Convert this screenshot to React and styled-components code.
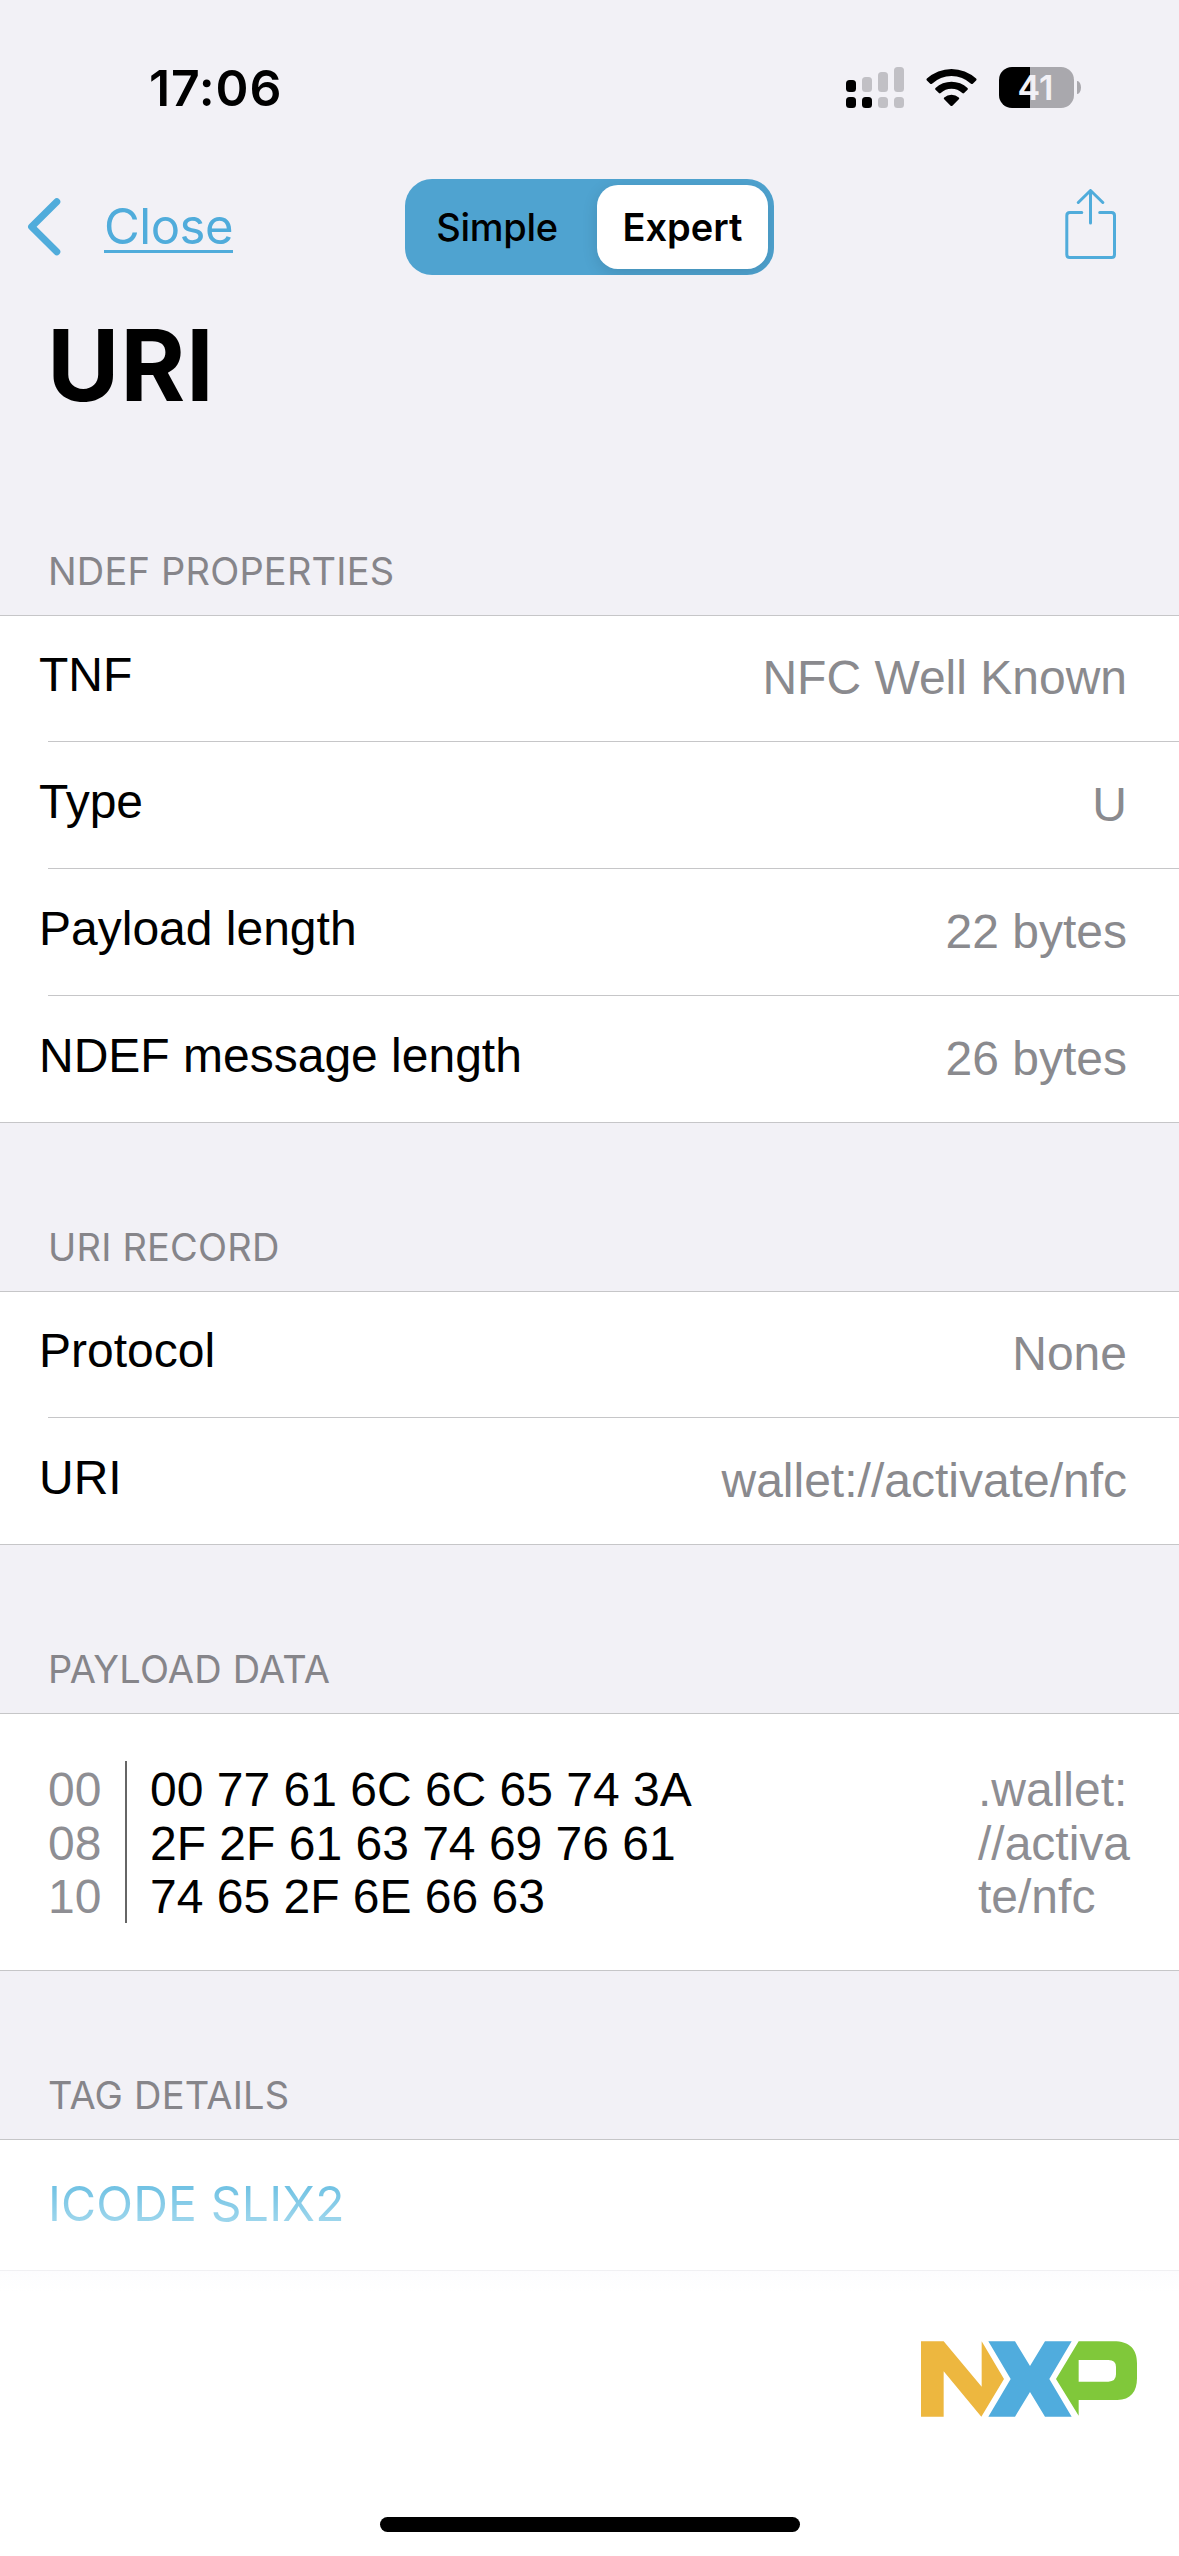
import { useState } from 'react';
import styled, { createGlobalStyle } from 'styled-components';

const sans = `Inter, "Liberation Sans", sans-serif`;
const arial = `"Liberation Sans", Arial, sans-serif`;

const GlobalStyle = createGlobalStyle`
  * {
    box-sizing: border-box;
  }

  body {
    margin: 0;
    background: #f2f1f6;
  }
`;

const Screen = styled.div`
  display: flex;
  flex-direction: column;
  width: 1179px;
  height: 2556px;
  overflow: hidden;
  background: #f2f1f6;
  color: #000;
  font-family: ${sans};
`;

const StatusBar = styled.header`
  display: flex;
  justify-content: space-between;
  height: 179px;
  padding: 58px 98px 0 149px;
`;

const Clock = styled.div`
  font-size: 50px;
  font-weight: 600;
  line-height: 60px;
  letter-spacing: 0.8px;
`;

const StatusIcons = styled.div`
  display: flex;
  align-items: flex-start;
  gap: 22px;
  padding-top: 9px;
`;

const Battery = styled.div`
  display: flex;
  align-items: center;
  gap: 3px;
`;

const BatteryBody = styled.div`
  width: 75px;
  height: 41px;
  padding-right: 2px;
  border-radius: 13px;
  background: linear-gradient(to right, #000 ${(p) => p.$level}%, #a9a8ad ${(p) => p.$level}%);
  color: #f2f1f6;
  font-size: 34px;
  font-weight: 600;
  line-height: 41px;
  text-align: center;
`;

const BatteryTip = styled.div`
  width: 4px;
  height: 13px;
  border-radius: 0 4px 4px 0 / 0 7px 7px 0;
  background: #a9a8ad;
`;

const NavBar = styled.nav`
  display: grid;
  grid-template-columns: 379px 369px 1fr;
  align-items: center;
  height: 96px;
  padding: 0 62px 0 26px;
`;

const BackButton = styled.button`
  display: flex;
  align-items: center;
  gap: 43px;
  padding: 0;
  border: none;
  background: none;
  color: #50acdb;
  font-family: ${sans};
  font-size: 49px;
  line-height: 60px;
  cursor: pointer;
`;

const BackText = styled.span`
  letter-spacing: -0.5px;
  text-decoration: underline;
  text-decoration-thickness: 3px;
  text-underline-offset: 6px;
  text-decoration-skip-ink: none;
`;

const Segmented = styled.div`
  display: flex;
  justify-content: space-between;
  width: 369px;
  height: 96px;
  padding: 6px;
  border-radius: 27px;
  overflow: hidden;
  background: #4fa3d0;
`;

const Segment = styled.button`
  width: ${(p) => (p.$active ? 171 : 172)}px;
  height: 84px;
  padding: 0;
  border: none;
  border-radius: 21px;
  background: ${(p) => (p.$active ? '#fff' : 'transparent')};
  box-shadow: ${(p) => (p.$active ? '0 4px 16px rgba(0, 0, 0, 0.12)' : 'none')};
  color: #000;
  font-family: ${sans};
  font-size: 38px;
  font-weight: ${(p) => (p.$active ? 600 : 500)};
  letter-spacing: ${(p) => (p.$active ? 0 : -0.3)}px;
  cursor: pointer;
`;

const ShareButton = styled.button`
  justify-self: end;
  display: flex;
  padding: 0 0 2px;
  border: none;
  background: none;
  color: #50acdb;
  cursor: pointer;
`;

const Title = styled.h1`
  height: 246px;
  margin: 0;
  padding: 30px 0 0 47px;
  font-size: 99px;
  font-weight: 700;
  line-height: 120px;
  letter-spacing: 0.8px;
`;

const SectionHeader = styled.h2`
  height: ${(p) => (p.$first ? 94 : 168)}px;
  margin: 0;
  padding: ${(p) => (p.$first ? 27 : 101)}px 0 0 48px;
  color: #86858a;
  font-size: 38px;
  font-weight: 400;
  line-height: 46px;
  letter-spacing: 0.2px;
`;

const Group = styled.div`
  border-top: 1px solid #c6c6c8;
  border-bottom: 1px solid #c6c6c8;
  background: #fff;
`;

const Row = styled.div`
  display: flex;
  justify-content: space-between;
  height: 127px;
  padding-top: 32px;
  font-family: ${arial};
  font-size: 48px;
  line-height: 56px;

  &:first-child {
    height: 125px;
    padding-top: 31px;
  }

  & + & {
    border-top: 1px solid #c6c6c8;
    margin-left: 48px;
  }
`;

// labels start left of the separator inset
const RowLabel = styled.span`
  margin-left: 39px;

  ${Row} + ${Row} & {
    margin-left: -9px;
  }
`;

const RowValue = styled.span`
  padding: 3px 52px 0 0;
  color: #8a8a8e;
`;

const Payload = styled.div`
  display: flex;
  height: 256px;
  padding: 47px 0 0 48px;
  font-family: ${arial};
  font-size: 48px;
  line-height: 53.5px;
  white-space: pre;
`;

const Offsets = styled.div`
  width: 77px;
  padding-top: 2px;
  color: #8e8e93;
`;

const HexBytes = styled.div`
  width: 853px;
  height: 162px;
  padding: 2px 0 0 23px;
  border-left: 2px solid #666;
`;

const Ascii = styled.div`
  padding-top: 2px;
  color: #8e8e93;
`;

const TagArea = styled.div`
  flex: 1;
  display: flex;
  flex-direction: column;
  border-top: 1px solid #c6c6c8;
  background: #fff;
`;

// the list dissolves into the footer, so the row carries its own white fade
const TagLink = styled.div`
  height: 160px;
  padding: 35px 0 0 48px;
  background: linear-gradient(#fff 130px, #f0f0f3 130px, #f0f0f3 131px, #fcfcfe 131px, #fff 152px);
  font-size: 48px;
  line-height: 58px;
  letter-spacing: 0.2px;
`;

const TagName = styled.span`
  display: inline-block;
  background: linear-gradient(#63bce1, #abdcef);
  background-clip: text;
  color: transparent;
`;

const Footer = styled.footer`
  flex: 1;
  display: flex;
  flex-direction: column;
  align-items: flex-end;
  justify-content: space-between;
  padding: 41px 41px 24px 0;
`;

const HomeIndicator = styled.div`
  align-self: center;
  width: 420px;
  height: 15px;
  margin-left: 42px;
  border-radius: 8px;
  background: #000;
`;

const sections = [
  {
    title: 'NDEF PROPERTIES',
    rows: [
      ['TNF', 'NFC Well Known'],
      ['Type', 'U'],
      ['Payload length', '22 bytes'],
      ['NDEF message length', '26 bytes'],
    ],
  },
  {
    title: 'URI RECORD',
    rows: [
      ['Protocol', 'None'],
      ['URI', 'wallet://activate/nfc'],
    ],
  },
];

const payload = [
  { offset: '00', hex: '00 77 61 6C 6C 65 74 3A', ascii: '.wallet:' },
  { offset: '08', hex: '2F 2F 61 63 74 69 76 61', ascii: '//activa' },
  { offset: '10', hex: '74 65 2F 6E 66 63', ascii: 'te/nfc' },
];

const signalBars = [
  { top: 13, height: 12, on: true, dot: true },
  { top: 10, height: 15, on: false, dot: true },
  { top: 5, height: 20, on: false, dot: false },
  { top: 0, height: 25, on: false, dot: false },
];

function SignalIcon() {
  return (
    <svg width="58" height="41" viewBox="0 0 58 41">
      {signalBars.map((bar, i) => (
        <g key={i}>
          <rect x={i * 16} y={bar.top} width="10" height={bar.height} rx="3.5" fill={bar.on ? '#000' : '#c1c0c5'} />
          <rect x={i * 16} y="30" width="10" height="11" rx="3.5" fill={bar.dot ? '#000' : '#c1c0c5'} />
        </g>
      ))}
    </svg>
  );
}

function WifiIcon() {
  return (
    <svg width="51" height="41" viewBox="926 67 51 41">
      <path d="M926.9 78.6a36 36 0 0 1 49.2 0q.9.9 0 1.8l-3.3 3.3q-.9.8-1.8 0a28.5 28.5 0 0 0-39 0q-.9.8-1.8 0l-3.3-3.3q-.9-.9 0-1.8z" />
      <path d="M935.5 88a23.4 23.4 0 0 1 32 0q.9.9 0 1.8l-3.4 3.3q-.9.8-1.8 0a15.8 15.8 0 0 0-21.6 0q-.9.8-1.8 0l-3.4-3.3q-.9-.9 0-1.8z" />
      <path d="M944.2 97.4a11 11 0 0 1 14.6 0q1 .9 0 1.8l-6.4 6.5q-.9.8-1.8 0l-6.4-6.5q-1-.9 0-1.8z" />
    </svg>
  );
}

function ChevronIcon() {
  return (
    <svg width="35" height="60" viewBox="27 197 35 60" fill="none" stroke="currentColor" strokeWidth="7" strokeLinecap="round" strokeLinejoin="round">
      <path d="M57.8 201.7L32.6 226.7L57.8 251.7" />
    </svg>
  );
}

function ShareIcon() {
  return (
    <svg width="53" height="74" viewBox="1064 189 53 74" fill="none" stroke="currentColor" strokeWidth="3" strokeLinecap="round" strokeLinejoin="round">
      <path d="M1081.8 212.5H1069.8Q1066.8 212.5 1066.8 215.5V254.5Q1066.8 257.5 1069.8 257.5H1111.5Q1114.5 257.5 1114.5 254.5V215.5Q1114.5 212.5 1111.5 212.5H1099.7" />
      <path d="M1090.5 223V190.7M1078.3 202.5L1090.5 190.5L1102.8 202.5" />
    </svg>
  );
}

function NxpLogo() {
  return (
    <svg width="217" height="76" viewBox="63 63 651 228">
      <path fill="#edb73f" d="M63 64H131L245 200V64L312 177L244 290L131 154V290H63Z" />
      <path fill="#50acdd" d="M265 64H345L390 138L435 64H515L448 177L515 290H435L390 216L345 290H265L332 177Z" />
      <path
        fill="#80c83a"
        fillRule="evenodd"
        d="M536 64H640C690 64 711 88 711 130V175C711 215 692 240 652 240H536V287L468 177ZM536 120V185H625Q648 185 648 163V141Q648 120 625 120Z"
      />
    </svg>
  );
}

export default function App() {
  const [mode, setMode] = useState('Expert');

  return (
    <Screen>
      <GlobalStyle />
      <StatusBar>
        <Clock>17:06</Clock>
        <StatusIcons>
          <SignalIcon />
          <WifiIcon />
          <Battery>
            <BatteryBody $level={41}>41</BatteryBody>
            <BatteryTip />
          </Battery>
        </StatusIcons>
      </StatusBar>

      <NavBar>
        <BackButton>
          <ChevronIcon />
          <BackText>Close</BackText>
        </BackButton>
        <Segmented>
          {['Simple', 'Expert'].map((name) => (
            <Segment key={name} $active={mode === name} onClick={() => setMode(name)}>
              {name}
            </Segment>
          ))}
        </Segmented>
        <ShareButton aria-label="Share">
          <ShareIcon />
        </ShareButton>
      </NavBar>

      <Title>URI</Title>

      {sections.map((section, i) => (
        <section key={section.title}>
          <SectionHeader $first={i === 0}>{section.title}</SectionHeader>
          <Group>
            {section.rows.map(([label, value]) => (
              <Row key={label}>
                <RowLabel>{label}</RowLabel>
                <RowValue>{value}</RowValue>
              </Row>
            ))}
          </Group>
        </section>
      ))}

      <SectionHeader>PAYLOAD DATA</SectionHeader>
      <Group>
        <Payload>
          <Offsets>
            {payload.map((line) => (
              <div key={line.offset}>{line.offset}</div>
            ))}
          </Offsets>
          <HexBytes>
            {payload.map((line) => (
              <div key={line.offset}>{line.hex}</div>
            ))}
          </HexBytes>
          <Ascii>
            {payload.map((line) => (
              <div key={line.offset}>{line.ascii}</div>
            ))}
          </Ascii>
        </Payload>
      </Group>

      <SectionHeader>TAG DETAILS</SectionHeader>
      <TagArea>
        <TagLink>
          <TagName>ICODE SLIX2</TagName>
        </TagLink>
        <Footer>
          <NxpLogo />
          <HomeIndicator />
        </Footer>
      </TagArea>
    </Screen>
  );
}
